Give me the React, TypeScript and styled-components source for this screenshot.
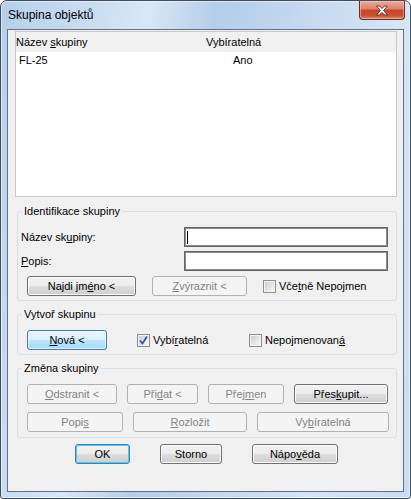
import React from "react";
import styled, { createGlobalStyle, css } from "styled-components";

const Global = createGlobalStyle`
  html, body { margin: 0; padding: 0; background: #ffffff; }
  body { font-family: "Liberation Sans", Arial, sans-serif; font-size: 11px; color: #000; }
  * { box-sizing: border-box; }
`;

const Window = styled.div`
  width: 411px;
  height: 499px;
  border: 1px solid #3d4c5f;
  border-radius: 7px 7px 3px 3px;
  background: linear-gradient(100deg, #b6cfea 0%, #cde0f3 22%, #d9e7f5 30%, #b4cde9 44%, #c1d6ee 58%, #d6e5f5 80%, #c9dcf1 100%);
  display: flex;
  flex-direction: column;
  box-shadow: inset 0 0 0 1px rgba(255, 255, 255, 0.55);
`;

const TitleBar = styled.div`
  height: 28px;
  display: flex;
  align-items: flex-start;
  padding-left: 7px;
  flex-shrink: 0;
`;

const Title = styled.div`
  font-size: 12px;
  line-height: 14px;
  margin-top: 7px;
  color: #000;
`;

const CloseButton = styled.div`
  margin-left: auto;
  margin-right: 5px;
  width: 46px;
  height: 19px;
  border: 1px solid #6d2b22;
  border-top: none;
  border-radius: 0 0 4px 4px;
  background: linear-gradient(#e9a99b 0%, #dc806c 45%, #c8452b 50%, #c9502f 80%, #de8a66 100%);
  box-shadow: inset 0 0 0 1px rgba(255, 220, 210, 0.45);
  display: flex;
  align-items: center;
  justify-content: center;
`;

const Client = styled.div`
  flex: 1;
  margin: 0 6px 6px 6px;
  border: 1px solid #60718a;
  background: #f0f0f0;
  display: flex;
  flex-direction: column;
`;

const ListView = styled.div`
  margin: 1px 0 0 7px;
  width: 382px;
  height: 166px;
  border: 1px solid #c5c8cc;
  display: flex;
  flex-direction: column;
`;

const ListHeader = styled.div`
  height: 20px;
  display: grid;
  grid-template-columns: 190px 1fr;
  align-items: center;
  background: #f0f0f0;
`;

const ListBody = styled.div`
  flex: 1;
  background: #ffffff;
`;

const ListRow = styled.div`
  height: 17px;
  display: grid;
  grid-template-columns: 214px 1fr;
  align-items: center;
  padding-left: 3px;
`;

const Cell = styled.span`
  line-height: 13px;
  white-space: nowrap;
`;

const Group = styled.fieldset<{ $mt: number }>`
  margin: ${(p) => p.$mt}px 0 0 9px;
  padding: 0;
  width: 380px;
  min-width: 0;
  border: 1px solid #d5dfe5;
  border-radius: 3px;
  flex-shrink: 0;
`;

const Legend = styled.legend`
  margin-left: 4px;
  padding: 0 2px;
  font-size: 11px;
  line-height: 13px;
  color: #000;
`;

const GroupBody = styled.div<{ $pb: number }>`
  display: flex;
  flex-direction: column;
  padding: 9px 0 ${(p) => p.$pb}px 0;
`;

const FieldRow = styled.div<{ $mt?: number }>`
  display: grid;
  grid-template-columns: 163px 204px;
  align-items: center;
  height: 20px;
  padding-left: 3px;
  margin-top: ${(p) => p.$mt ?? 0}px;
`;

const Label = styled.span`
  line-height: 13px;
  white-space: nowrap;
`;

const TextBox = styled.div`
  height: 20px;
  border: 1px solid #646464;
  box-shadow: inset 0 0 0 1px #8c8c8c;
  background: #ffffff;
  display: flex;
  align-items: center;
  padding-left: 2px;
`;

const Caret = styled.div`
  width: 1px;
  height: 13px;
  background: #000;
`;

const ButtonRow = styled.div<{ $mt?: number; $gap: number }>`
  display: flex;
  align-items: center;
  height: 20px;
  padding-left: 9px;
  gap: ${(p) => p.$gap}px;
  margin-top: ${(p) => p.$mt ?? 0}px;
`;

type BtnKind = "normal" | "disabled" | "hot" | "default";

const Button = styled.div<{ $w: number; $kind?: BtnKind }>`
  width: ${(p) => p.$w}px;
  height: 20px;
  flex-shrink: 0;
  border-radius: 3px;
  display: flex;
  align-items: center;
  justify-content: center;
  line-height: 13px;
  white-space: nowrap;
  ${(p) => {
    switch (p.$kind) {
      case "disabled":
        return css`
          border: 1px solid #adb2b5;
          background: #f4f4f4;
          color: #838383;
        `;
      case "hot":
        return css`
          border: 1px solid #3c7fb1;
          background: linear-gradient(#eaf6fd 0%, #d9f0fc 50%, #bee6fd 50%, #a7d9f5 100%);
          box-shadow: inset 0 0 0 1px rgba(255, 255, 255, 0.6);
          color: #000;
        `;
      case "default":
        return css`
          border: 1px solid #3c7fb1;
          background: linear-gradient(#f2f2f2 0%, #ebebeb 50%, #dddddd 50%, #cfcfcf 100%);
          box-shadow: inset 0 0 0 1px #48cdf6;
          color: #000;
        `;
      default:
        return css`
          border: 1px solid #707070;
          background: linear-gradient(#f2f2f2 0%, #ebebeb 50%, #dddddd 50%, #cfcfcf 100%);
          box-shadow: inset 0 0 0 1px #fbfbfb;
          color: #000;
        `;
    }
  }}
`;

const CheckItem = styled.div<{ $w?: number }>`
  display: flex;
  align-items: center;
  gap: 3px;
  width: ${(p) => (p.$w ? `${p.$w}px` : "auto")};
  flex-shrink: 0;
`;

const Box = styled.div`
  width: 13px;
  height: 13px;
  border: 1px solid #8e8f8f;
  background: #f4f4f4;
  padding: 1px;
  flex-shrink: 0;
`;

const BoxInner = styled.div`
  width: 9px;
  height: 9px;
  background: linear-gradient(135deg, #c9ccd2 0%, #e2e3e6 50%, #f6f6f6 100%);
  position: relative;
`;

const CheckMark = styled.svg`
  position: absolute;
  left: -1px;
  top: -1px;
`;

const BottomRow = styled.div`
  display: flex;
  gap: 30px;
  margin-top: 6px;
  padding-left: 67px;
`;

const Check: React.FC<{ checked?: boolean; w?: number; children: React.ReactNode }> = ({ checked, w, children }) => (
  <CheckItem $w={w}>
    <Box>
      <BoxInner>
        {checked && (
          <CheckMark width="11" height="11" viewBox="0 0 11 11">
            <path d="M2 5.5 L4.5 8.5 L9 1.5" fill="none" stroke="#3f56a0" strokeWidth="1.8" />
          </CheckMark>
        )}
      </BoxInner>
    </Box>
    <Label>{children}</Label>
  </CheckItem>
);

export default function App() {
  return (
    <>
      <Global />
      <Window>
        <TitleBar>
          <Title>Skupina objektů</Title>
          <CloseButton>
            <svg width="14" height="11" viewBox="0 0 14 11">
              <path
                d="M1.5 1 L4.5 1 L7 3.6 L9.5 1 L12.5 1 L8.6 5.5 L12.5 10 L9.5 10 L7 7.4 L4.5 10 L1.5 10 L5.4 5.5 Z"
                fill="#ffffff"
                stroke="#5a2a22"
                strokeWidth="0.9"
                strokeLinejoin="round"
              />
            </svg>
          </CloseButton>
        </TitleBar>
        <Client>
          <ListView>
            <ListHeader>
              <Cell>
                Název <u>s</u>kupiny
              </Cell>
              <Cell>Vybíratelná</Cell>
            </ListHeader>
            <ListBody>
              <ListRow>
                <Cell>FL-25</Cell>
                <Cell>Ano</Cell>
              </ListRow>
            </ListBody>
          </ListView>

          <Group $mt={8}>
            <Legend>Identifikace skupiny</Legend>
            <GroupBody $pb={4}>
              <FieldRow>
                <Label>
                  Název sk<u>u</u>piny:
                </Label>
                <TextBox>
                  <Caret />
                </TextBox>
              </FieldRow>
              <FieldRow $mt={4}>
                <Label>
                  <u>P</u>opis:
                </Label>
                <TextBox />
              </FieldRow>
              <ButtonRow $mt={5} $gap={16}>
                <Button $w={109}>
                  <span>
                    Najdi jm<u>é</u>no &lt;
                  </span>
                </Button>
                <Button $w={95} $kind="disabled">
                  <span>
                    <u>Z</u>výraznit &lt;
                  </span>
                </Button>
                <Check>
                  Vče<u>t</u>ně Nepojmen
                </Check>
              </ButtonRow>
            </GroupBody>
          </Group>

          <Group $mt={7}>
            <Legend>Vytvoř skupinu</Legend>
            <GroupBody $pb={4}>
              <ButtonRow $gap={30}>
                <Button $w={80} $kind="hot">
                  <span>
                    <u>N</u>ová &lt;
                  </span>
                </Button>
                <Check checked w={82}>
                  Vybí<u>r</u>atelná
                </Check>
                <Check>
                  Nepojmenovan<u>á</u>
                </Check>
              </ButtonRow>
            </GroupBody>
          </Group>

          <Group $mt={7}>
            <Legend>Změna skupiny</Legend>
            <GroupBody $pb={5}>
              <ButtonRow $gap={10}>
                <Button $w={90} $kind="disabled">
                  <span>
                    <u>O</u>dstranit &lt;
                  </span>
                </Button>
                <Button $w={71} $kind="disabled">
                  <span>
                    Při<u>d</u>at &lt;
                  </span>
                </Button>
                <Button $w={76} $kind="disabled">
                  <span>
                    Přej<u>m</u>en
                  </span>
                </Button>
                <Button $w={94}>
                  <span>
                    Přes<u>k</u>upit...
                  </span>
                </Button>
              </ButtonRow>
              <ButtonRow $mt={8} $gap={10}>
                <Button $w={96} $kind="disabled">
                  <span>
                    Popi<u>s</u>
                  </span>
                </Button>
                <Button $w={114} $kind="disabled">
                  <span>
                    <u>R</u>ozložit
                  </span>
                </Button>
                <Button $w={132} $kind="disabled">
                  <span>
                    Vy<u>b</u>íratelná
                  </span>
                </Button>
              </ButtonRow>
            </GroupBody>
          </Group>

          <BottomRow>
            <Button $w={55} $kind="default">
              OK
            </Button>
            <Button $w={62}>Storno</Button>
            <Button $w={86}>
              <span>
                Nápo<u>v</u>ěda
              </span>
            </Button>
          </BottomRow>
        </Client>
      </Window>
    </>
  );
}
